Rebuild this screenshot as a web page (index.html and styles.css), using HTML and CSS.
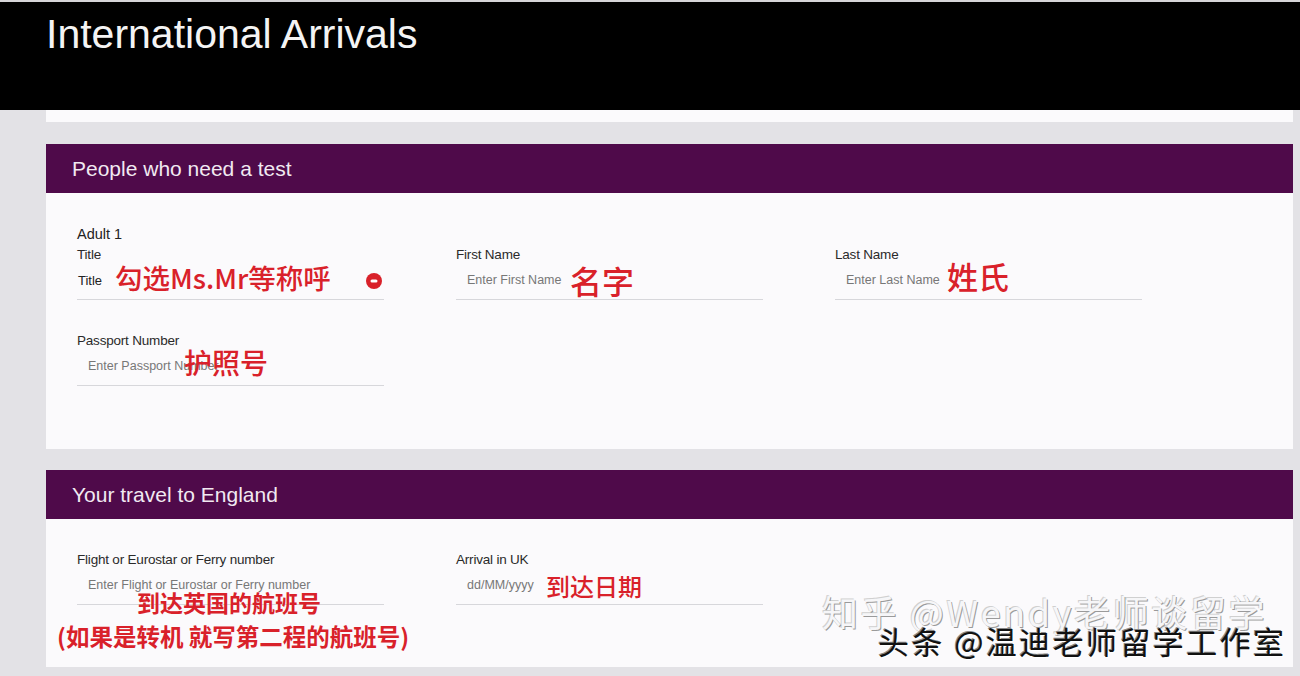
FILE: index.html
```html
<!DOCTYPE html>
<html lang="en">
<head>
<meta charset="utf-8">
<title>International Arrivals</title>
<link rel="stylesheet" href="styles.css">
</head>
<body>
<header class="topbar">
  <h1 class="topbar-title">International Arrivals</h1>
</header>
<main class="content">
  <div class="strip"></div>

  <section class="card">
    <h2 class="card-head">People who need a test</h2>
    <div class="card-body">
      <div class="person">Adult 1</div>
      <div class="grid">
        <div class="field">
          <div class="label">Title</div>
          <div class="input select">Title
            <span class="note note-title">勾选Ms.Mr等称呼</span>
            <svg class="dot" width="16" height="16" viewBox="0 0 16 16"><circle cx="8" cy="8" r="8" fill="#d9212a"/><rect x="4.5" y="6.5" width="7" height="3" rx="1.5" fill="#fff"/></svg>
          </div>
        </div>
        <div class="field">
          <div class="label">First Name</div>
          <div class="input">Enter First Name
            <span class="note note-first">名字</span>
          </div>
        </div>
        <div class="field">
          <div class="label">Last Name</div>
          <div class="input">Enter Last Name
            <span class="note note-last">姓氏</span>
          </div>
        </div>
        <div class="field">
          <div class="label">Passport Number</div>
          <div class="input">Enter Passport Number
            <span class="note note-passport">护照号</span>
          </div>
        </div>
      </div>
    </div>
  </section>

  <section class="card">
    <h2 class="card-head">Your travel to England</h2>
    <div class="card-body card-body-travel">
      <div class="grid">
        <div class="field">
          <div class="label">Flight or Eurostar or Ferry number</div>
          <div class="input">Enter Flight or Eurostar or Ferry number
            <span class="note note-flight">到达英国的航班号</span>
            <span class="note note-transfer">(如果是转机 就写第二程的航班号)</span>
          </div>
        </div>
        <div class="field">
          <div class="label">Arrival in UK</div>
          <div class="input">dd/MM/yyyy
            <span class="note note-date">到达日期</span>
          </div>
        </div>
      </div>
    </div>
  </section>
</main>
<div class="watermark wm-zhihu">知乎 @Wendy老师谈留学</div>
<div class="watermark wm-toutiao">头条 @温迪老师留学工作室</div>
</body>
</html>
```
FILE: styles.css
```css
html, body {
  margin: 0;
  padding: 0;
}
body {
  position: relative;
  width: 1300px;
  height: 676px;
  overflow: hidden;
  background: #e3e2e6;
  font-family: "Liberation Sans", Arial, "Noto Sans CJK SC", sans-serif;
  border-top: 2px solid #d6d5d8;
  box-sizing: border-box;
}
.topbar {
  background: #000;
  height: 108px;
  padding: 9px 0 0 46px;
  box-sizing: border-box;
}
.topbar-title {
  margin: 0;
  color: #f4f4f4;
  font-weight: 400;
  font-size: 41px;
  line-height: 47px;
}
.content {
  padding: 0 7px 0 46px;
}
.strip {
  height: 12px;
  background: #fbfafc;
  margin-bottom: 22px;
}
.card {
  background: #fbfafc;
  margin-bottom: 21px;
}
.card-head {
  margin: 0;
  height: 49px;
  line-height: 49px;
  padding-left: 26px;
  background: #4f0a4a;
  color: #f1e9f1;
  font-weight: 400;
  font-size: 21px;
}
.card-body {
  padding: 33px 31px 63px;
}
.card-body-travel {
  padding-bottom: 62px;
}
.person {
  font-size: 14.5px;
  line-height: 16px;
  color: #222;
  margin-bottom: 5px;
}
.grid {
  display: grid;
  grid-template-columns: repeat(3, 307px);
  column-gap: 72px;
  row-gap: 33px;
}
.label {
  font-size: 13.5px;
  line-height: 15px;
  color: #2a2a2a;
  letter-spacing: -0.2px;
}
.input {
  position: relative;
  padding: 11px 0 11px 11px;
  line-height: 15px;
  font-size: 12.5px;
  color: #777;
  border-bottom: 1px solid #d7d7db;
  white-space: nowrap;
}
.input.select {
  padding-left: 1px;
  color: #222;
  font-size: 13px;
}
.note {
  position: absolute;
  color: #d9212a;
  font-family: "Noto Sans CJK SC", "Liberation Sans", sans-serif;
  font-weight: 500;
  white-space: nowrap;
}
.note-title {
  left: 38px;
  top: 0;
  font-size: 27.5px;
  line-height: 30px;
}
.dot {
  position: absolute;
  left: 289px;
  top: 11px;
}
.note-first {
  left: 114px;
  top: 1px;
  font-size: 32px;
  line-height: 34px;
}
.note-last {
  left: 112px;
  top: -3px;
  font-size: 31px;
  line-height: 34px;
}
.note-passport {
  left: 107px;
  top: -1px;
  font-size: 28px;
  line-height: 30px;
}
.note-flight {
  left: 60px;
  top: 22px;
  font-size: 23px;
  line-height: 26px;
  font-weight: 700;
}
.note-transfer {
  left: -20px;
  top: 56px;
  font-size: 23.5px;
  line-height: 26px;
  font-weight: 700;
}
.note-date {
  left: 90px;
  top: 6px;
  font-size: 24px;
  line-height: 26px;
}
.watermark {
  position: absolute;
  white-space: nowrap;
  font-family: "Noto Sans CJK SC", "Liberation Sans", sans-serif;
}
.wm-zhihu {
  left: 822px;
  top: 589px;
  font-size: 36px;
  line-height: 40px;
  letter-spacing: 2.6px;
  color: #f6f6f8;
  text-shadow: 1px 1px 0 #9a9a9a, -1px -1px 0 #d0d0d0;
}
.wm-toutiao {
  left: 878px;
  top: 622px;
  font-size: 31px;
  line-height: 34px;
  letter-spacing: 2.4px;
  color: #111;
  text-shadow: 1px 1px 0 #fff, -1px -1px 0 #888;
}
```
